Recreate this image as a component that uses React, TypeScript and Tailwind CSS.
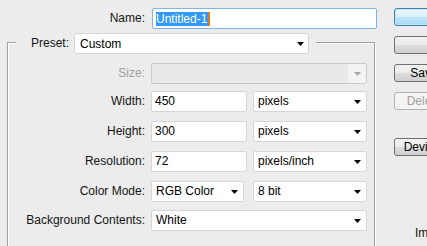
import React from "react";

function Arrow({ disabled = false }: { disabled?: boolean }) {
  return (
    <svg width="7" height="4" viewBox="0 0 7 4" className="shrink-0">
      <polygon points="0,0 7,0 3.5,4" fill={disabled ? "#a6a6a6" : "#000"} />
    </svg>
  );
}

function Select({ w, text }: { w: string; text: string }) {
  return (
    <div
      className={`${w} h-[21px] bg-white border border-[#d6d6d6] rounded-[2px] flex items-center justify-between pl-[4px] pr-[5px] leading-[19px] text-black`}
    >
      <span>{text}</span>
      <Arrow />
    </div>
  );
}

function Input({ w, text }: { w: string; text: string }) {
  return (
    <div
      className={`${w} h-[21px] bg-white border border-[#d6d6d6] rounded-[2px] flex items-center pl-[3px] leading-[19px] text-black`}
    >
      {text}
    </div>
  );
}

function Row({
  label,
  mt,
  disabled = false,
  children,
}: {
  label: string;
  mt: string;
  disabled?: boolean;
  children: React.ReactNode;
}) {
  return (
    <div className={`flex h-[21px] ${mt}`}>
      <div
        className={`w-[137px] text-right leading-[21px] ${disabled ? "text-[#a0a0a0]" : "text-[#141414]"}`}
      >
        {label}
      </div>
      <div className="ml-[6px] flex">{children}</div>
    </div>
  );
}

function Btn({
  label,
  mt,
  primary = false,
  disabled = false,
}: {
  label: string;
  mt: string;
  primary?: boolean;
  disabled?: boolean;
}) {
  const border = primary
    ? "border-[#3c7fb1] shadow-[inset_0_0_0_1px_#c4e5f6]"
    : disabled
      ? "border-[#adb2b5]"
      : "border-[#707070]";
  const bg = disabled
    ? "bg-[#f4f4f4]"
    : primary
      ? "bg-[linear-gradient(#eaf6fd,#d9f0fc_50%,#bee6fd_50%,#a7d9f5)]"
      : "bg-[linear-gradient(#f2f2f2,#ebebeb_50%,#dddddd_50%,#cfcfcf)]";
  return (
    <div
      className={`${mt} w-[108px] h-[18px] shrink-0 rounded-[3px] border ${border} ${bg} flex items-center justify-center leading-[16px] whitespace-nowrap ${disabled ? "text-[#a0a0a0]" : "text-black"}`}
    >
      {label}
    </div>
  );
}

export default function App() {
  return (
    <div className="w-[427px] h-[246px] overflow-hidden bg-[#ececec] flex font-['Liberation_Sans',Arial,sans-serif] text-[12px] text-[#141414]">
      {/* Left column */}
      <div className="w-[394px] shrink-0 flex flex-col">
        {/* Name row */}
        <div className="mt-[8px] flex h-[21px]">
          <div className="w-[145px] text-right leading-[21px]">Name:</div>
          <div className="ml-[7px] w-[225px] h-[21px] bg-white border border-[#7eb4ea] rounded-[2px] flex items-center pl-[3px]">
            <span className="bg-[#3399ff] text-white leading-[14px] pr-[1px]">Untitled-1</span>
            <span className="w-[2px] h-[14px] bg-[#e07a10]" />
          </div>
        </div>

        {/* Group box */}
        <div className="mt-[4px] ml-[7px] w-[368px] flex flex-col">
          <div className="flex h-[21px]">
            <div className="w-[9px] h-[12px] self-end border-l border-t border-[#a0a0a0] shadow-[inset_1px_1px_0_#fff]" />
            <div className="flex items-center pr-[7px]">
              <div className="w-[53px] text-right leading-[21px]">Preset:</div>
              <div className="ml-[5px] w-[235px] h-[21px] bg-white border border-[#d6d6d6] rounded-[2px] flex items-center justify-between pl-[5px] pr-[4px] text-black">
                <span>Custom</span>
                <Arrow />
              </div>
            </div>
            <div className="flex-1 h-[12px] self-end border-t border-r border-[#a0a0a0] shadow-[inset_0_1px_0_#fff,1px_0_0_#fff]" />
          </div>

          <div className="h-[210px] border-l border-r border-[#a0a0a0] shadow-[inset_1px_0_0_#fff,1px_0_0_#fff] flex flex-col">
            <Row label="Size:" mt="mt-[9px]" disabled>
              <div className="w-[216px] h-[21px] bg-[#e9e9e9] border border-[#cacaca] rounded-[2px] flex items-center justify-end">
                <div className="w-[18px] h-full bg-[#f3f3f3] flex items-center justify-center">
                  <Arrow disabled />
                </div>
              </div>
            </Row>
            <Row label="Width:" mt="mt-[7px]">
              <Input w="w-[96px]" text="450" />
              <div className="ml-[6px]">
                <Select w="w-[114px]" text="pixels" />
              </div>
            </Row>
            <Row label="Height:" mt="mt-[9px]">
              <Input w="w-[96px]" text="300" />
              <div className="ml-[6px]">
                <Select w="w-[114px]" text="pixels" />
              </div>
            </Row>
            <Row label="Resolution:" mt="mt-[9px]">
              <Input w="w-[96px]" text="72" />
              <div className="ml-[6px]">
                <Select w="w-[114px]" text="pixels/inch" />
              </div>
            </Row>
            <Row label="Color Mode:" mt="mt-[9px]">
              <Select w="w-[93px]" text="RGB Color" />
              <div className="ml-[9px]">
                <Select w="w-[114px]" text="8 bit" />
              </div>
            </Row>
            <Row label="Background Contents:" mt="mt-[8px]">
              <Select w="w-[216px]" text="White" />
            </Row>
          </div>
        </div>
      </div>

      {/* Right column: buttons */}
      <div className="flex flex-col">
        <Btn label="OK" mt="mt-[8px]" primary />
        <Btn label="Reset" mt="mt-[10px]" />
        <Btn label="Save Preset..." mt="mt-[10px]" />
        <Btn label="Delete Preset..." mt="mt-[10px]" disabled />
        <Btn label="Device Central..." mt="mt-[28px]" />
        <div className="mt-[70px] ml-[21px] whitespace-nowrap leading-[14px]">Image Size:</div>
      </div>
    </div>
  );
}
